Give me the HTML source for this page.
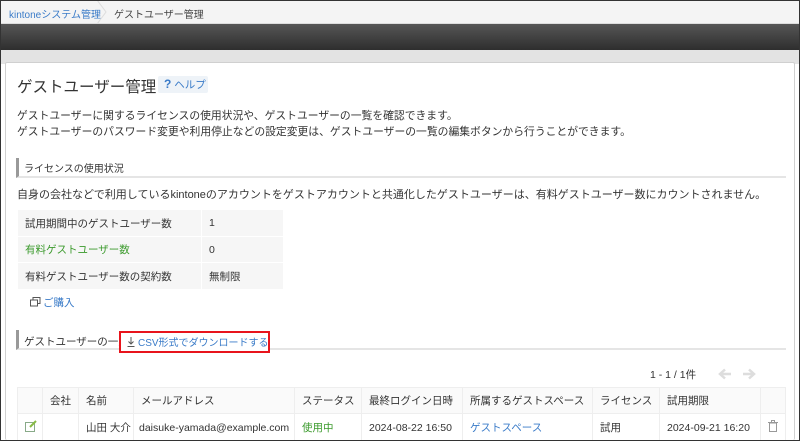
<!DOCTYPE html>
<html><head><meta charset="utf-8"><style>
*{margin:0;padding:0;box-sizing:border-box}
html,body{width:800px;height:441px;overflow:hidden}
body{font-family:"Liberation Sans","Noto Sans CJK JP",sans-serif;color:#333;background:#fff;position:relative;font-size:11px}
.a{position:absolute;white-space:nowrap}
.blue{color:#3a7bc8}
.green{color:#3b9a2c}
table{border-collapse:collapse;position:absolute;table-layout:fixed}
td{font-size:10.5px;white-space:nowrap;overflow:hidden}
</style></head><body>
<div class="a" style="left:0;top:0;width:800px;height:24px;background:#f4f4f4;border-bottom:1px solid #ddd"></div>
<div class="a blue" style="left:9px;top:6px;font-size:10px">kintoneシステム管理</div>
<svg class="a" style="left:96px;top:0" width="12" height="24"><path d="M1 0 L10 12 L1 24" fill="none" stroke="#ddd"/></svg>
<div class="a" style="left:114px;top:6px;font-size:10px;color:#444">ゲストユーザー管理</div>
<div class="a" style="left:0;top:24px;width:800px;height:26px;background:linear-gradient(#565656,#2e2e2e)"></div>
<div class="a" style="left:0;top:50px;width:800px;height:14px;background:#e3e3e3"></div>
<div class="a" style="left:5px;top:62px;width:790px;height:378px;background:#fff;border:1px solid #d0d0d0;border-bottom:none;border-radius:2px"></div>
<div class="a" style="left:17px;top:75px;font-size:15.5px;color:#333">ゲストユーザー管理</div>
<div class="a" style="left:158px;top:76px;width:50px;height:17px;background:#eef3f8;border-radius:2px"></div>
<div class="a blue" style="left:164px;top:77px;font-size:10.5px"><b style="font-size:12px">?</b> ヘルプ</div>
<div class="a" style="left:17px;top:108px;line-height:16px;font-size:10.8px">ゲストユーザーに関するライセンスの使用状況や、ゲストユーザーの一覧を確認できます。<br>ゲストユーザーのパスワード変更や利用停止などの設定変更は、ゲストユーザーの一覧の編集ボタンから行うことができます。</div>
<div class="a" style="left:16px;top:158px;width:770px;height:20px;border-left:3px solid #999;border-bottom:2px solid #e5e5e5"></div>
<div class="a" style="left:24px;top:160px;font-size:10px">ライセンスの使用状況</div>
<div class="a" style="left:17px;top:186px;font-size:11px">自身の会社などで利用しているkintoneのアカウントをゲストアカウントと共通化したゲストユーザーは、有料ゲストユーザー数にカウントされません。</div>
<table style="left:17px;top:209px;width:267px;background:#f6f6f6">
<tr style="height:27px"><td style="width:184px;padding-left:7px;border:1px solid #fff">試用期間中のゲストユーザー数</td><td style="padding-left:7px;border:1px solid #fff">1</td></tr>
<tr style="height:26px"><td class="green" style="padding-left:7px;border:1px solid #fff">有料ゲストユーザー数</td><td style="padding-left:7px;border:1px solid #fff">0</td></tr>
<tr style="height:27px"><td style="padding-left:7px;border:1px solid #fff">有料ゲストユーザー数の契約数</td><td style="padding-left:7px;border:1px solid #fff">無制限</td></tr>
</table>
<svg class="a" style="left:30px;top:297px" width="11" height="10"><rect x="3" y="0.5" width="7" height="6" fill="none" stroke="#555"/><rect x="0.5" y="3" width="7" height="6" fill="#fff" stroke="#555"/></svg>
<div class="a blue" style="left:43px;top:295px;font-size:10.5px">ご購入</div>
<div class="a" style="left:16px;top:330px;width:770px;height:20px;border-left:3px solid #999;border-bottom:2px solid #e5e5e5"></div>
<div class="a" style="left:24px;top:334px;font-size:10.5px">ゲストユーザーの一覧</div>
<div class="a" style="left:119px;top:331px;width:151px;height:22px;border:2px solid #e8141c;background:#fff"></div>
<svg class="a" style="left:127px;top:337px" width="8" height="10"><path d="M4 0 V7 M1.5 4.5 L4 7 L6.5 4.5 M0.5 9.5 H7.5" stroke="#555" fill="none"/></svg>
<div class="a blue" style="left:138px;top:334px;font-size:10px">CSV形式でダウンロードする</div>
<div class="a" style="left:650px;top:367px;font-size:10.5px">1 - 1 / 1件</div>
<svg class="a" style="left:718px;top:368px" width="14" height="12"><path d="M13 6 H3 M7 1.5 L2 6 L7 10.5" stroke="#ddd" stroke-width="2.5" fill="none"/></svg>
<svg class="a" style="left:742px;top:368px" width="14" height="12"><path d="M1 6 H11 M7 1.5 L12 6 L7 10.5" stroke="#ddd" stroke-width="2.5" fill="none"/></svg>
<table style="left:17px;top:387px;width:768px">
<colgroup><col style="width:25px"><col style="width:36px"><col style="width:55px"><col style="width:161px"><col style="width:67px"><col style="width:101px"><col style="width:130px"><col style="width:67px"><col style="width:101px"><col style="width:25px"></colgroup>
<tr style="height:26px;background:#fafafa"><td style="border:1px solid #eee"></td><td style="border:1px solid #eee;padding-left:7px">会社</td><td style="border:1px solid #eee;padding-left:7px">名前</td><td style="border:1px solid #eee;padding-left:7px">メールアドレス</td><td style="border:1px solid #eee;padding-left:7px">ステータス</td><td style="border:1px solid #eee;padding-left:7px">最終ログイン日時</td><td style="border:1px solid #eee;padding-left:7px">所属するゲストスペース</td><td style="border:1px solid #eee;padding-left:7px">ライセンス</td><td style="border:1px solid #eee;padding-left:7px">試用期限</td><td style="border:1px solid #eee"></td></tr>
<tr style="height:28px"><td style="border:1px solid #eee;padding-left:7px"><svg width="12" height="12"><rect x="0.5" y="2.5" width="9" height="9" fill="none" stroke="#8a8"/><path d="M5 7 L11 1" stroke="#8b4" stroke-width="2"/></svg></td><td style="border:1px solid #eee"></td><td style="border:1px solid #eee;padding-left:7px">山田 大介</td><td style="border:1px solid #eee;padding-left:5px;font-size:10.5px">daisuke-yamada@example.com</td><td class="green" style="border:1px solid #eee;padding-left:7px">使用中</td><td style="border:1px solid #eee;padding-left:7px">2024-08-22 16:50</td><td class="blue" style="border:1px solid #eee;padding-left:7px">ゲストスペース</td><td style="border:1px solid #eee;padding-left:7px">試用</td><td style="border:1px solid #eee;padding-left:7px">2024-09-21 16:20</td><td style="border:1px solid #eee;padding-left:7px"><svg width="10" height="12"><rect x="1.5" y="3" width="7" height="8.5" fill="none" stroke="#999"/><path d="M0 2.5 H10 M3.5 2.5 V0.5 H6.5 V2.5" stroke="#999" fill="none"/></svg></td></tr>
</table>
<div class="a" style="left:0;top:0;width:800px;height:441px;border:1px solid #333;pointer-events:none"></div>
</body></html>
